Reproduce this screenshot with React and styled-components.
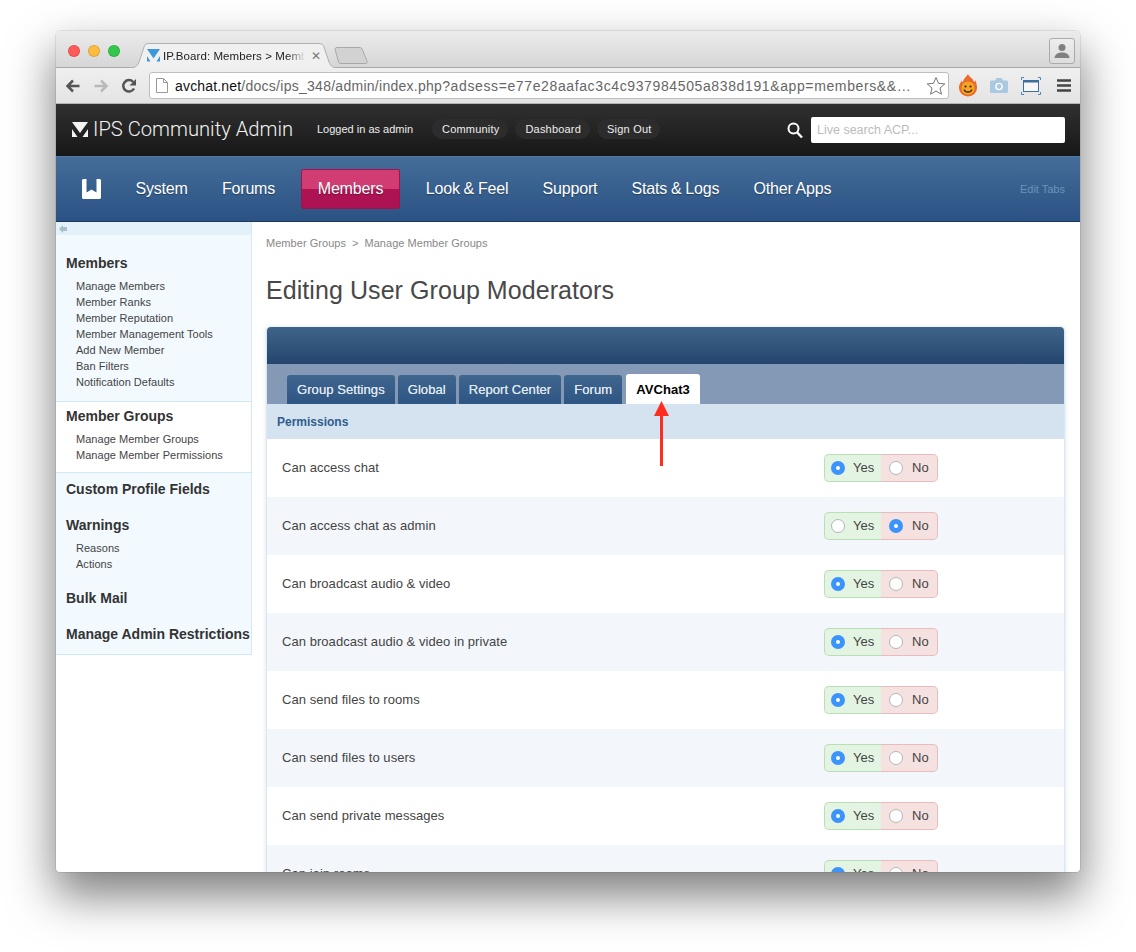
import React from "react";
import styled, { createGlobalStyle } from "styled-components";

const Global = createGlobalStyle`
  html, body { margin: 0; padding: 0; background: #fff; height: 952px; overflow: hidden; }
  * { box-sizing: border-box; }
  body { font-family: "Liberation Sans", Arial, sans-serif; }
`;

const Page = styled.div`
  width: 1136px; height: 952px; padding: 31px 56px 80px; overflow: hidden;
`;
const Win = styled.div`
  width: 1024px; height: 841px; border-radius: 5px 5px 4px 4px; overflow: hidden; background: #fff;
  display: flex; flex-direction: column;
  box-shadow: 0 22px 46px 2px rgba(0,0,0,.5), 0 0 0 1px rgba(0,0,0,.08);
`;

/* browser chrome */
const TabStrip = styled.div`
  height: 37px; flex: none; display: flex; align-items: flex-end; position: relative;
  background: linear-gradient(#ececec, #d6d6d6); border-bottom: 1px solid #a9a9a9;
  padding-left: 12px;
`;
const Lights = styled.div`display: flex; gap: 8px; align-self: flex-start; margin-top: 14px; width: 62px;`;
const Light = styled.span`
  width: 12px; height: 12px; border-radius: 50%; background: ${p => p.$c}; border: 1px solid rgba(0,0,0,.12);
`;
const TabShape = styled.div`
  width: 208px; height: 25px; position: relative; margin-bottom: -1px; display: flex; align-items: center;
  padding-left: 17px; font-size: 11.5px; color: #222; white-space: nowrap;
`;
const TabBg = styled.svg`position: absolute; inset: 0;`;
const TabContent = styled.div`position: relative; display: flex; align-items: center; gap: 3px; width: 178px;`;
const TabTitle = styled.span`
  width: 144px; overflow: hidden; letter-spacing: .08px;
  -webkit-mask-image: linear-gradient(90deg, #000 86%, transparent 99%);
  mask-image: linear-gradient(90deg, #000 86%, transparent 99%);
`;
const TabX = styled.span`font-size: 12px; color: #777; line-height: 1; margin-left: 1px;`;
const NewTab = styled.svg`margin: 0 0 3px -4px; flex: none;`;
const Person = styled.div`
  position: absolute; right: 5px; top: 7px; width: 26px; height: 26px; border: 1px solid #aaa; border-radius: 3px;
  background: linear-gradient(#eee, #ddd); display: flex; align-items: center; justify-content: center;
`;

const Toolbar = styled.div`
  height: 36px; flex: none; display: flex; align-items: center; padding: 0 8px 0 9px;
  background: linear-gradient(#efefef, #e4e4e4); border-bottom: 1px solid #b5b5b5;
`;
const NavIcon = styled.svg`flex: none; margin-right: 12px;`;
const UrlBar = styled.div`
  width: 800px; height: 27px; flex: none; background: #fff; border: 1px solid #bdbdbd; border-radius: 3px;
  display: flex; align-items: center; padding: 0 2px 0 6px; font-size: 14px; color: #666; white-space: nowrap;
`;
const Host = styled.span`color: #111; letter-spacing: .17px;`;
const UrlText = styled.span`margin-left: 7px;`;
const UrlPath = styled.span`letter-spacing: .27px;`;
const UrlQuery = styled.span`letter-spacing: .62px;`;
const ExtIcons = styled.div`display: flex; align-items: center; margin-left: 10px;`;

/* admin header */
const AdminBar = styled.div`
  height: 52px; flex: none; display: flex; align-items: center; padding: 0 15px 0 16px; color: #fff;
  background: linear-gradient(#303030, #171717);
`;
const Brand = styled.div`
  display: flex; align-items: center; gap: 5px; font-family: Roboto, "Open Sans", sans-serif; font-weight: 300;
  font-size: 20.2px; color: #f2f2f2; width: 245px; white-space: nowrap; margin-bottom: 3px;
`;
const LoggedIn = styled.span`font-size: 11px; color: #eee; margin: 0 18px 2px 0; width: 97px; white-space: nowrap;`;
const Pill = styled.a`
  font-size: 11px; letter-spacing: .2px; color: #eee; background: #2c2c2c; border-radius: 10px; height: 20px; padding: 0 9px 0 10px;
  display: flex; align-items: center; margin: 0 7px 2px 0; white-space: nowrap;
`;
const SearchIcon = styled.svg`margin-left: auto; margin-right: 8px; flex: none;`;
const SearchBox = styled.div`
  width: 254px; height: 26px; background: #fff; border-radius: 2px; color: #bbb; font-size: 12.5px;
  display: flex; align-items: center; padding-left: 6px;
`;

/* blue nav */
const MainNav = styled.div`
  height: 66px; flex: none; display: flex; align-items: center; padding-left: 26px;
  background: linear-gradient(#446d99, #2b5284); border-top: 1px solid #4f7ba8; border-bottom: 1px solid #1d3a5e;
`;
const BookIcon = styled.svg`flex: none; margin-right: 17.3px;`;
const NavItem = styled.a`
  font-size: 16px; letter-spacing: -.17px; word-spacing: -.5px; color: #fff; height: 40px; display: flex; align-items: center; white-space: nowrap;
  text-shadow: 0 1px 1px rgba(0,0,0,.35);
  padding: 0 ${p => p.$active ? 16 : 17.1}px; margin: 0 ${p => p.$active ? 8.5 : 0}px;
  ${p => p.$active ? `
    background: linear-gradient(#d13c72 0 50%, #ad1252 50% 100%);
    border: 1px solid #9c1450; border-radius: 2px;
  ` : ""}
`;
const EditTabs = styled.span`margin-left: auto; margin-right: 15px; font-size: 11px; color: #6c93bb;`;

/* body */
const Body = styled.div`flex: 1; min-height: 0; display: flex; overflow: hidden;`;
const Side = styled.aside`width: 196px; flex: none;`;
const Collapse = styled.div`
  height: 13px; background: #e3f1fb; border-right: 1px solid #d5e8f5; padding-left: 3px; display: flex; align-items: center;
`;
const Group = styled.div`
  background: ${p => p.$current ? "#fff" : "#f2faff"};
  padding: ${p => p.$pad};
  border-right: 1px solid #d5e8f5; border-bottom: 1px solid #cfe9f8;
`;
const Head = styled.div`
  font-size: 14px; font-weight: bold; color: #333; line-height: 18px; white-space: nowrap;
  margin-top: ${p => p.$mt || 0}px;
`;
const Links = styled.div`display: flex; flex-direction: column; padding: 6px 0 ${p => p.$pb || 0}px 10px;`;
const SideLink = styled.a`font-size: 11px; letter-spacing: .03px; line-height: 16px; color: #444; white-space: nowrap;`;

const Main = styled.main`flex: 1; min-width: 0; padding: 15px 15px 0 14px; position: relative;`;
const Crumbs = styled.div`font-size: 11px; letter-spacing: .04px; color: #888; line-height: 13px; display: flex; gap: 6px;`;
const Title = styled.h1`
  margin: 24px 0 0; font-weight: 400; font-size: 25px; letter-spacing: .07px; line-height: 32px; color: #484848; height: 53px; white-space: nowrap;
`;
const Card = styled.div`
  border-radius: 4px 4px 0 0; border: 1px solid #dbe7f2; border-top: 0; box-shadow: 0 0 4px rgba(60,100,140,.2);
`;
const CardHead = styled.div`height: 37px; background: linear-gradient(#3f6489, #24466e); border-radius: 4px 4px 0 0;`;
const TabsBar = styled.div`
  height: 40px; background: #8499b5; display: flex; align-items: flex-end; padding-left: 20px; gap: 3px;
`;
const Tab = styled.a`
  height: ${p => p.$active ? 30 : 29}px; padding: 0 10px; border-radius: 3px 3px 0 0;
  display: flex; align-items: center; font-size: 13px; letter-spacing: .07px; white-space: nowrap; margin-left: ${p => p.$active ? 1 : 0}px;
  ${p => p.$active
    ? "background:#fff;color:#000;font-weight:bold;"
    : "background:linear-gradient(#3f668e,#2f5583);color:#dfe7ef;text-shadow:0 0 .5px #dfe7ef;"}
`;
const SectionBar = styled.div`
  height: 35px; background: #d5e2f0; padding-left: 10px; display: flex; align-items: center;
  font-size: 12px; font-weight: bold; color: #2f5d8c;
`;
const Row = styled.div`
  height: 58px; flex: none; display: flex; align-items: center; padding-left: 15px; font-size: 13px; color: #444;
  background: ${p => p.$alt ? "#f3f7fb" : "#fff"};
`;
const RowLabel = styled.span`width: 542px; flex: none; letter-spacing: .05px; margin-top: -2px;`;
const Toggle = styled.div`display: flex; height: 28px; width: 114px; font-size: 13px; color: #444;`;
const Half = styled.div`
  flex: 0 0 57px; display: flex; align-items: center; gap: ${p => p.$yes ? 8 : 9}px; padding-bottom: 1px;
  padding-left: ${p => p.$yes ? 6 : 8}px; border: 1px solid ${p => p.$yes ? "#b9e0b4" : "#e8bcbc"};
  ${p => p.$yes ? "border-right:0;border-radius:5px 0 0 5px;background:#e3f4e3;" : "border-left:0;border-radius:0 5px 5px 0;background:#f6e1e1;"}
`;
const Radio = styled.span`
  width: 14px; height: 14px; border-radius: 50%; flex: none; margin-top: 1px;
  ${p => p.$on
    ? "background:#3a94fb;display:flex;align-items:center;justify-content:center;&::after{content:'';width:4px;height:4px;border-radius:50%;background:#fff;}"
    : "background:#fff;border:1px solid #b5b5b5;"}
`;
const Arrow = styled.svg`position: absolute; left: 402px; top: 179px; pointer-events: none;`;

const Favicon = () => (
  <svg width="13" height="13" viewBox="0 0 13 13" style={{ flex: "none" }}>
    <path d="M0 0H13L6.500 9.500Z" fill="#3d98d8" />
    <path d="M0 7L3.500 12.500H0ZM13 7V12.500H9.500Z" fill="#3d98d8" />
  </svg>
);

const Flame = () => (
  <svg width="18" height="23" viewBox="0 0 18 23">
    <path d="M9 0C10 3 14 4 15 8 16 7.500 16 6.500 16 6 17.500 9 18 11 18 14A9 8.500 0 0 1 0 14C0 10 2 8.500 2.500 6.500 3 7.500 3.300 8 4 8.500 4 5 7 3.500 9 0Z" fill="#ea6a2c" />
    <circle cx="9" cy="14" r="6.600" fill="#f6a423" />
    <circle cx="6.500" cy="12.500" r="1.100" fill="#3a2410" />
    <circle cx="11.500" cy="12.500" r="1.100" fill="#3a2410" />
    <path d="M5 15.500C6.500 19 11.500 19 13 15.500" fill="none" stroke="#3a2410" strokeWidth="1.200" />
  </svg>
);

const rows = [
  ["Can access chat", true],
  ["Can access chat as admin", false],
  ["Can broadcast audio & video", true],
  ["Can broadcast audio & video in private", true],
  ["Can send files to rooms", true],
  ["Can send files to users", true],
  ["Can send private messages", true],
  ["Can join rooms", true],
];

const navItems = ["System", "Forums", "Members", "Look & Feel", "Support", "Stats & Logs", "Other Apps"];
const tabs = ["Group Settings", "Global", "Report Center", "Forum", "AVChat3"];

export default function App() {
  return (
    <Page>
      <Global />
      <Win>
        <TabStrip>
          <Lights>
            <Light $c="#fc5b57" /><Light $c="#fdbc40" /><Light $c="#34c84a" />
          </Lights>
          <TabShape>
            <TabBg width="208" height="25" viewBox="0 0 208 25">
              <path d="M0 25C6 25 8 22 9 19L14 4C15 1 16 .5 19 .5H189C192 .5 193 1 194 4L199 19C200 22 202 25 208 25" fill="#f0f0f0" stroke="#b0b0b0" />
            </TabBg>
            <TabContent>
              <Favicon />
              <TabTitle>IP.Board: Members &gt; Memb</TabTitle>
              <TabX>✕</TabX>
            </TabContent>
          </TabShape>
          <NewTab width="34" height="17" viewBox="0 0 34 17">
            <path d="M1 2C1 1 2 .5 3 .5H25C27 .5 28 1 28.500 3L33 14C33.500 15.500 33 16.500 31 16.500H7C5.500 16.500 5 16 4.500 15Z" fill="#d2d2d2" stroke="#a8a8a8" />
          </NewTab>
          <Person>
            <svg width="18" height="16" viewBox="0 0 18 16">
              <circle cx="9" cy="4.500" r="3.500" fill="#808080" />
              <path d="M1.500 15C2 11 5 9.500 9 9.500S16 11 16.500 15Z" fill="#808080" />
            </svg>
          </Person>
        </TabStrip>
        <Toolbar>
          <NavIcon width="16" height="16" viewBox="0 0 16 16">
            <path d="M14.500 8H3M8 2.500L2.500 8L8 13.500" fill="none" stroke="#555" strokeWidth="2.500" />
          </NavIcon>
          <NavIcon width="16" height="16" viewBox="0 0 16 16">
            <path d="M1.500 8H13M8 2.500L13.500 8L8 13.500" fill="none" stroke="#b9b9b9" strokeWidth="2.500" />
          </NavIcon>
          <NavIcon width="16" height="16" viewBox="0 0 16 16">
            <path d="M13 10.500A5.700 5.700 0 1 1 12.200 4" fill="none" stroke="#555" strokeWidth="2.500" />
            <path d="M15 1V7.500H8.500Z" fill="#555" />
          </NavIcon>
          <UrlBar>
            <svg width="12" height="15" viewBox="0 0 12 15" style={{ flex: "none" }}>
              <path d="M.5 .5H7.500L11.500 4.500V14.500H.5ZM7.500 .5V4.500H11.500" fill="#fff" stroke="#999" />
            </svg>
            <UrlText>
              <Host>avchat.net</Host>
              <UrlPath>/docs/ips_348/admin/index.php</UrlPath>
              <UrlQuery>?adsess=e77e28aafac3c4c937984505a838d191&amp;app=members&amp;&amp;…</UrlQuery>
            </UrlText>
            <svg width="20" height="20" viewBox="0 0 20 20" style={{ flex: "none", marginLeft: "auto" }}>
              <path d="M10 1.500L12.500 7.300L18.800 7.900L14 12L15.500 18.200L10 15L4.500 18.200L6 12L1.200 7.900L7.500 7.300Z" fill="#fff" stroke="#777" />
            </svg>
          </UrlBar>
          <ExtIcons>
            <Flame />
            <svg width="18" height="15" viewBox="0 0 18 15" style={{ marginLeft: 13 }}>
              <path d="M0 4C0 3 .8 2.500 1.500 2.500H5L6.500 0H11.500L13 2.500H16.500C17.200 2.500 18 3 18 4V13.500C18 14.300 17.200 15 16.500 15H1.500C.8 15 0 14.300 0 13.500Z" fill="#a9c8e2" />
              <circle cx="9" cy="8.500" r="3.800" fill="#fff" />
              <circle cx="9" cy="8.500" r="2.400" fill="#a9c8e2" />
            </svg>
            <svg width="20" height="18" viewBox="0 0 20 18" style={{ marginLeft: 13 }}>
              <path d="M.5 3V.5H3M17 .5H19.500V3M.5 15V17.500H3M17 17.500H19.500V15" fill="none" stroke="#4a86b8" />
              <rect x="2.500" y="3.500" width="15" height="11" fill="#f7f7f7" stroke="#3f6f9c" />
              <rect x="2.500" y="3.500" width="15" height="2" fill="#3f6f9c" />
            </svg>
            <svg width="14" height="13" viewBox="0 0 14 13" style={{ marginLeft: 16 }}>
              <path d="M0 1.500H14M0 6.500H14M0 11.500H14" stroke="#444" strokeWidth="2.400" />
            </svg>
          </ExtIcons>
        </Toolbar>
        <AdminBar>
          <Brand>
            <svg width="16" height="15" viewBox="0 0 16 15" style={{ flex: "none", marginTop: 2 }}>
              <path d="M0 0H16L8 11Z" fill="#f4f4f4" />
              <path d="M0 7L5.500 15H0ZM16 7V15H10.500Z" fill="#f4f4f4" />
            </svg>
            IPS Community Admin
          </Brand>
          <LoggedIn>Logged in as admin</LoggedIn>
          <Pill>Community</Pill>
          <Pill>Dashboard</Pill>
          <Pill>Sign Out</Pill>
          <SearchIcon width="16" height="17" viewBox="0 0 16 17">
            <circle cx="6.500" cy="6.500" r="5" fill="none" stroke="#fff" strokeWidth="2" />
            <path d="M10.200 10.500L15 15.500" stroke="#fff" strokeWidth="2.400" />
          </SearchIcon>
          <SearchBox>Live search ACP...</SearchBox>
        </AdminBar>
        <MainNav>
          <BookIcon width="19" height="20" viewBox="0 0 19 20">
            <path fillRule="evenodd" d="M1.500 0H17.500C18.300 0 19 .7 19 1.500V18.500C19 19.300 18.300 20 17.500 20H1.500C.7 20 0 19.300 0 18.500V1.500C0 .7 .7 0 1.500 0ZM4.500 0V13.500L9.500 10.500L14.500 13.500V0Z" fill="#fff" />
          </BookIcon>
          {navItems.map(n => <NavItem key={n} $active={n === "Members"}>{n}</NavItem>)}
          <EditTabs>Edit Tabs</EditTabs>
        </MainNav>
        <Body>
          <Side>
            <Collapse>
              <svg width="8" height="8" viewBox="0 0 8 8"><path d="M4 0V2H8V6H4V8L0 4Z" fill="#a9bdcc" /></svg>
            </Collapse>
            <Group $pad="19px 0 9px 10px">
              <Head>Members</Head>
              <Links $pb={2}>
                {["Manage Members", "Member Ranks", "Member Reputation", "Member Management Tools", "Add New Member", "Ban Filters", "Notification Defaults"].map(l => <SideLink key={l}>{l}</SideLink>)}
              </Links>
            </Group>
            <Group $current $pad="5px 0 9px 10px">
              <Head>Member Groups</Head>
              <Links>
                {["Manage Member Groups", "Manage Member Permissions"].map(l => <SideLink key={l}>{l}</SideLink>)}
              </Links>
            </Group>
            <Group $pad="7px 0 11px 10px">
              <Head>Custom Profile Fields</Head>
              <Head $mt={18}>Warnings</Head>
              <Links>
                <SideLink>Reasons</SideLink>
                <SideLink>Actions</SideLink>
              </Links>
              <Head $mt={17}>Bulk Mail</Head>
              <Head $mt={18}>Manage Admin Restrictions</Head>
            </Group>
          </Side>
          <Main>
            <Crumbs><span>Member Groups</span><span>&gt;</span><span>Manage Member Groups</span></Crumbs>
            <Title>Editing User Group Moderators</Title>
            <Card>
              <CardHead />
              <TabsBar>
                {tabs.map(t => <Tab key={t} $active={t === "AVChat3"}>{t}</Tab>)}
              </TabsBar>
              <SectionBar>Permissions</SectionBar>
              {rows.map(([label, yes], i) => (
                <Row key={label} $alt={i % 2 === 1}>
                  <RowLabel>{label}</RowLabel>
                  <Toggle>
                    <Half $yes><Radio $on={yes} />Yes</Half>
                    <Half><Radio $on={!yes} />No</Half>
                  </Toggle>
                </Row>
              ))}
            </Card>
            <Arrow width="16" height="65" viewBox="0 0 16 65">
              <path d="M6 14H9V65H6Z" fill="#ff2d20" />
              <path d="M7.500 0L15 15H0Z" fill="#ff2d20" />
            </Arrow>
          </Main>
        </Body>
      </Win>
    </Page>
  );
}
